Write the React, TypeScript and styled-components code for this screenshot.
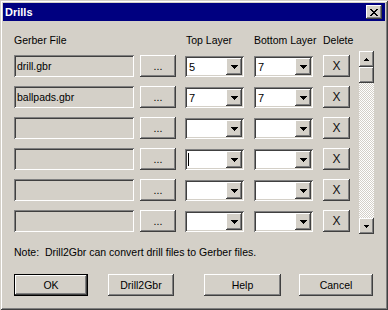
import styled, { createGlobalStyle, css } from "styled-components";

const face = "#d4d0c8";

const GlobalStyle = createGlobalStyle`
  html, body {
    margin: 0;
    padding: 0;
    background: ${face};
  }
  body {
    font-family: "Liberation Sans", Arial, sans-serif;
    font-size: 10.5px;
    color: #000;
  }
`;

const raised = css`
  background: ${face};
  box-shadow: inset -1px -1px #404040, inset 1px 1px #ffffff,
    inset -2px -2px #808080, inset 2px 2px ${face};
`;

const sunken = css`
  box-shadow: inset 1px 1px #808080, inset -1px -1px #ffffff,
    inset 2px 2px #404040, inset -2px -2px ${face};
`;

const Window = styled.div`
  width: 388px;
  height: 310px;
  box-sizing: border-box;
  padding: 3px;
  background: ${face};
  box-shadow: inset 1px 1px ${face}, inset -1px -1px #404040,
    inset 2px 2px #ffffff, inset -2px -2px #808080;
  display: flex;
  flex-direction: column;
`;

const TitleBar = styled.div`
  height: 18px;
  background: #000080;
  display: flex;
  align-items: center;
  justify-content: space-between;
  padding: 0 3px 0 2px;
`;

const Title = styled.span`
  color: #fff;
  font-weight: bold;
  font-size: 11px;
  line-height: 18px;
`;

const CloseButton = styled.div`
  ${raised};
  width: 16px;
  height: 14px;
  display: flex;
  align-items: center;
  justify-content: center;
  padding-right: 1px;
  box-sizing: border-box;
`;

const Body = styled.div`
  padding: 13px 11px 0 11px;
  display: flex;
  flex-direction: column;
`;

const Main = styled.div`
  display: flex;
  align-items: flex-start;
`;

const Table = styled.div`
  display: flex;
  flex-direction: column;
  gap: 9px;
`;

const HeaderRow = styled.div`
  display: flex;
  height: 12px;
  line-height: 12px;
`;

const HeaderCell = styled.div<{ $w: number; $pl?: number }>`
  width: ${(p) => p.$w}px;
  padding-left: ${(p) => p.$pl ?? 0}px;
  box-sizing: border-box;
  white-space: nowrap;
`;

const Row = styled.div`
  display: flex;
  align-items: flex-end;
  height: 22px;
`;

const FileBox = styled.div`
  ${sunken};
  background: ${face};
  width: 120px;
  height: 22px;
  box-sizing: border-box;
  padding-left: 3px;
  display: flex;
  align-items: center;
`;

const PushButton = styled.div<{ $w: number; $ml?: number; $default?: boolean }>`
  ${raised};
  width: ${(p) => p.$w}px;
  height: 22px;
  margin-left: ${(p) => p.$ml ?? 0}px;
  box-sizing: border-box;
  display: flex;
  align-items: center;
  justify-content: center;
  flex: none;
  ${(p) =>
    p.$default &&
    css`
      box-shadow: inset 0 0 0 1px #000, inset -2px -2px #404040,
        inset 2px 2px #ffffff, inset -3px -3px #808080;
    `}
`;

const DeleteMark = styled.span`
  font-size: 12px;
  font-weight: 300;
  color: #111;
`;

const Combo = styled.div<{ $ml: number }>`
  ${sunken};
  background: #fff;
  width: 59px;
  height: 21px;
  margin-left: ${(p) => p.$ml}px;
  box-sizing: border-box;
  padding: 2px;
  display: flex;
  align-items: stretch;
`;

const ComboText = styled.div`
  flex: 1;
  padding-left: 2px;
  font-size: 11px;
  display: flex;
  align-items: center;
`;

const Caret = styled.span`
  width: 1px;
  height: 13px;
  background: #000;
  margin-left: -1px;
`;

const DropButton = styled.div`
  ${raised};
  width: 16px;
  display: flex;
  align-items: center;
  justify-content: center;
`;

const ScrollBar = styled.div`
  width: 15px;
  height: 183px;
  margin-left: 9px;
  margin-top: 17px;
  display: flex;
  flex-direction: column;
`;

const ScrollButton = styled.div`
  ${raised};
  height: 16px;
  display: flex;
  align-items: center;
  justify-content: center;
`;

const Track = styled.div`
  flex: 1;
  background-image: conic-gradient(
    #ffffff 25%,
    ${face} 0 50%,
    #ffffff 0 75%,
    ${face} 0
  );
  background-size: 2px 2px;
`;

const Note = styled.div`
  margin-top: 12px;
  line-height: 12px;
  white-space: pre;
`;

const ButtonRow = styled.div`
  display: flex;
  margin-top: 16px;
`;

const Arrow = ({ down, w }: { down?: boolean; w: number }) => {
  const h = Math.ceil(w / 2);
  let d = "";
  for (let i = 0; i < h; i++) {
    const y = down ? i : h - 1 - i;
    d += `M${i} ${y}h${w - 2 * i}v1H${i}z`;
  }
  return (
    <svg width={w} height={h} shapeRendering="crispEdges">
      <path d={d} fill="#000" />
    </svg>
  );
};

const CloseGlyph = () => (
  <svg width="8" height="7" shapeRendering="crispEdges">
    <path
      d="M0 0h2v1H0zM6 0h2v1H6zM1 1h2v1H1zM5 1h2v1H5zM2 2h4v1H2zM3 3h2v1H3zM2 4h4v1H2zM1 5h2v1H1zM5 5h2v1H5zM0 6h2v1H0zM6 6h2v1H6z"
      fill="#000"
    />
  </svg>
);

type Drill = { file: string; top: string; bottom: string; caret?: boolean };

const drills: Drill[] = [
  { file: "drill.gbr", top: "5", bottom: "7" },
  { file: "ballpads.gbr", top: "7", bottom: "7" },
  { file: "", top: "", bottom: "" },
  { file: "", top: "", bottom: "", caret: true },
  { file: "", top: "", bottom: "" },
  { file: "", top: "", bottom: "" },
];

const LayerCombo = ({ value, ml, caret }: { value: string; ml: number; caret?: boolean }) => (
  <Combo $ml={ml}>
    <ComboText>
      {caret && <Caret />}
      {value}
    </ComboText>
    <DropButton>
      <Arrow down w={7} />
    </DropButton>
  </Combo>
);

export default function App() {
  return (
    <>
      <GlobalStyle />
      <Window>
        <TitleBar>
          <Title>Drills</Title>
          <CloseButton>
            <CloseGlyph />
          </CloseButton>
        </TitleBar>
        <Body>
          <Main>
            <Table>
              <HeaderRow>
                <HeaderCell $w={171}>Gerber File</HeaderCell>
                <HeaderCell $w={69} $pl={1}>Top Layer</HeaderCell>
                <HeaderCell $w={69}>Bottom Layer</HeaderCell>
                <HeaderCell $w={27}>Delete</HeaderCell>
              </HeaderRow>
              {drills.map((d, i) => (
                <Row key={i}>
                  <FileBox>{d.file}</FileBox>
                  <PushButton $w={36} $ml={6}>...</PushButton>
                  <LayerCombo value={d.top} ml={9} caret={d.caret} />
                  <LayerCombo value={d.bottom} ml={10} />
                  <PushButton $w={27} $ml={10}>
                    <DeleteMark>X</DeleteMark>
                  </PushButton>
                </Row>
              ))}
            </Table>
            <ScrollBar>
              <ScrollButton>
                <Arrow w={5} />
              </ScrollButton>
              <ScrollButton />
              <Track />
              <ScrollButton>
                <Arrow down w={5} />
              </ScrollButton>
            </ScrollBar>
          </Main>
          <Note>Note:  Drill2Gbr can convert drill files to Gerber files.</Note>
          <ButtonRow>
            <PushButton $w={74} $default>OK</PushButton>
            <PushButton $w={66} $ml={20}>Drill2Gbr</PushButton>
            <PushButton $w={77} $ml={30}>Help</PushButton>
            <PushButton $w={74} $ml={18}>Cancel</PushButton>
          </ButtonRow>
        </Body>
      </Window>
    </>
  );
}
